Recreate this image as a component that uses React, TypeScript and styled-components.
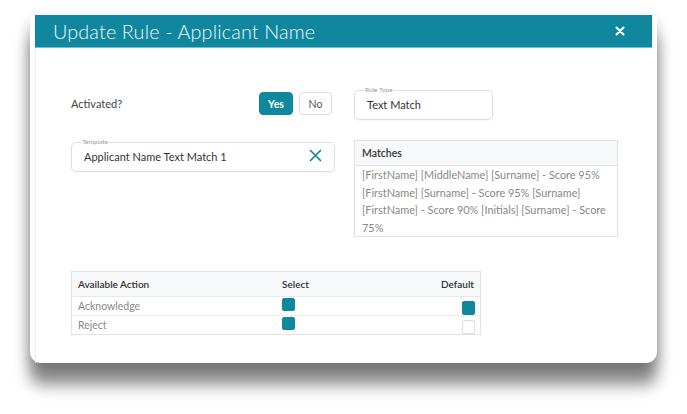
import React from "react";
import styled, { createGlobalStyle } from "styled-components";

const Global = createGlobalStyle`
  html, body { margin: 0; padding: 0; background: #fff; }
  body { font-family: "Lato", "Noto Sans", sans-serif; }
  * { box-sizing: border-box; }
`;

const Stage = styled.div`
  width: 687px;
  height: 414px;
  padding: 15px 0 0 30px;
  overflow: hidden;
`;

const Card = styled.div`
  width: 627px;
  height: 348px;
  background: #fff;
  border-radius: 0 0 11px 11px;
  box-shadow: 0 22px 16px rgba(0, 0, 0, 0.45), 0 6px 14px rgba(0, 0, 0, 0.2);
  padding: 0 5px;
  display: flex;
  flex-direction: column;
`;

const Header = styled.div`
  height: 33px;
  background: #11879f;
  border-bottom: 1px solid #6fc0d2;
  display: flex;
  align-items: center;
  justify-content: space-between;
  padding: 0 27px 0 18px;
`;

const Title = styled.h1`
  margin: 0;
  font-size: 19.8px;
  font-weight: 300;
  color: #eef8fa;
  letter-spacing: 0.15px;
`;

const CloseBtn = styled.button`
  border: 0;
  background: transparent;
  padding: 0;
  display: flex;
  width: 10px;
  height: 10px;
`;

const Body = styled.div`
  flex: 1;
  border-left: 1px solid #eeeeee;
  padding: 38px 0 0 35px;
  display: flex;
  flex-direction: column;
`;

const Grid = styled.div`
  display: grid;
  grid-template-columns: 264px 264px;
  column-gap: 19px;
  row-gap: 18px;
  align-items: start;
`;

const ActivatedRow = styled.div`
  height: 33px;
  padding-top: 2px;
  display: flex;
  align-items: center;
  justify-content: space-between;
  padding-right: 3px;
`;

const Label = styled.span`
  font-size: 11px;
  color: #444;
`;

const Toggle = styled.div`
  display: flex;
  gap: 6px;
`;

const ToggleBtn = styled.button<{ $active?: boolean }>`
  height: 23px;
  padding: 0;
  width: ${(p) => (p.$active ? "34px" : "33px")};
  border-radius: 4px;
  font-family: inherit;
  font-size: 10.5px;
  font-weight: ${(p) => (p.$active ? 700 : 400)};
  color: ${(p) => (p.$active ? "#fff" : "#555")};
  background: ${(p) => (p.$active ? "#11879f" : "#fff")};
  border: 1px solid ${(p) => (p.$active ? "#11879f" : "#dcdcdc")};
`;

const Field = styled.fieldset<{ $w: number }>`
  width: ${(p) => p.$w}px;
  height: 34px;
  margin: 0;
  padding: 0 12px 0 10px;
  border: 1px solid #dedede;
  border-radius: 5px;
  display: flex;
  align-items: center;
  justify-content: space-between;
  box-shadow: 0 1px 2px rgba(0, 0, 0, 0.04);
`;

const Legend = styled.legend`
  font-size: 6.5px;
  color: #999;
  padding: 0 1px;
  margin-left: -1px;
  line-height: 8px;
`;

const FieldValue = styled.span`
  font-size: 11px;
  color: #333;
  margin-top: -5px;
  padding-left: 2px;
`;

const ClearBtn = styled.button`
  border: 0;
  background: transparent;
  padding: 0;
  display: flex;
  margin-top: -6px;
`;

const Matches = styled.div`
  border: 1px solid #e2e2e2;
  margin-top: 2px;
`;

const MatchesHead = styled.div`
  height: 25px;
  background: #f6f8fa;
  border-bottom: 1px solid #e4e4e4;
  display: flex;
  align-items: center;
  padding-left: 7px;
  font-size: 10.5px;
  font-weight: 600;
  color: #333;
`;

const MatchesText = styled.div`
  padding: 0 5px 0 7px;
  font-size: 10.9px;
  line-height: 17.6px;
  color: #888;
`;

const Table = styled.div`
  margin-top: 34px;
  width: 410px;
  border: 1px solid #e4e4e4;
  display: grid;
  grid-template-columns: 204px 1fr 1fr;
`;

const HeadCell = styled.div<{ $right?: boolean }>`
  height: 25px;
  background: #f6f8fa;
  display: flex;
  align-items: center;
  justify-content: ${(p) => (p.$right ? "flex-end" : "flex-start")};
  padding: ${(p) => (p.$right ? "0 6px 0 0" : "0 0 0 6px")};
  font-size: 10px;
  font-weight: 600;
  color: #333;
  border-bottom: 1px solid #e8e8e8;
`;

const Cell = styled.div<{ $right?: boolean; $last?: boolean }>`
  height: ${(p) => (p.$last ? "18px" : "19px")};
  display: flex;
  align-items: ${(p) => (p.$right ? "flex-end" : "center")};
  justify-content: ${(p) => (p.$right ? "flex-end" : "flex-start")};
  padding: ${(p) => (p.$right ? "0 5px 0 0" : "0 0 0 6px")};
  font-size: 10.5px;
  color: #888;
  border-bottom: ${(p) => (p.$last ? "0" : "1px solid #eeeeee")};
`;

const Check = styled.span<{ $on?: boolean; $tall?: boolean }>`
  display: block;
  width: 13px;
  height: ${(p) => (p.$tall ? "14px" : "13px")};
  border-radius: 2px;
  background: ${(p) => (p.$on ? "#11879f" : "#fff")};
  border: 1px solid ${(p) => (p.$on ? "#11879f" : "#dddddd")};
`;

const SelectCheck = styled(Check)`
  margin-top: -3px;
`;

const matches =
  "[FirstName] [MiddleName] [Surname] - Score 95% [FirstName] [Surname] - Score 95% [Surname] [FirstName] - Score 90% [Initials] [Surname] - Score 75%";

const rows = [
  { name: "Acknowledge", select: true, def: true },
  { name: "Reject", select: true, def: false },
];

export default function App() {
  return (
    <>
      <Global />
      <Stage>
        <Card>
          <Header>
            <Title>Update Rule - Applicant Name</Title>
            <CloseBtn aria-label="Close">
              <svg width="10" height="10" viewBox="0 0 10 10">
                <path d="M1.5 1.5 L8.5 8.5 M8.5 1.5 L1.5 8.5" stroke="#fff" strokeWidth="2" strokeLinecap="round" />
              </svg>
            </CloseBtn>
          </Header>
          <Body>
            <Grid>
              <ActivatedRow>
                <Label>Activated?</Label>
                <Toggle>
                  <ToggleBtn $active>Yes</ToggleBtn>
                  <ToggleBtn>No</ToggleBtn>
                </Toggle>
              </ActivatedRow>
              <Field $w={139}>
                <Legend>Rule Type</Legend>
                <FieldValue>Text Match</FieldValue>
              </Field>
              <Field $w={264}>
                <Legend>Template</Legend>
                <FieldValue>Applicant Name Text Match 1</FieldValue>
                <ClearBtn aria-label="Clear">
                  <svg width="13" height="13" viewBox="0 0 13 13">
                    <path d="M1.5 1.5 L11.5 11.5 M11.5 1.5 L1.5 11.5" stroke="#11879f" strokeWidth="1.7" strokeLinecap="round" />
                  </svg>
                </ClearBtn>
              </Field>
              <Matches>
                <MatchesHead>Matches</MatchesHead>
                <MatchesText>{matches}</MatchesText>
              </Matches>
            </Grid>
            <Table>
              <HeadCell>Available Action</HeadCell>
              <HeadCell>Select</HeadCell>
              <HeadCell $right>Default</HeadCell>
              {rows.map((r, i) => {
                const last = i === rows.length - 1;
                return (
                  <React.Fragment key={r.name}>
                    <Cell $last={last}>{r.name}</Cell>
                    <Cell $last={last}>
                      <SelectCheck $on={r.select} />
                    </Cell>
                    <Cell $last={last} $right>
                      <Check $on={r.def} $tall />
                    </Cell>
                  </React.Fragment>
                );
              })}
            </Table>
          </Body>
        </Card>
      </Stage>
    </>
  );
}
